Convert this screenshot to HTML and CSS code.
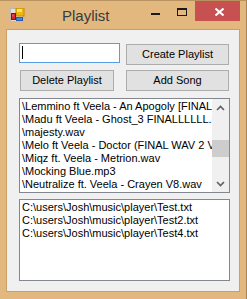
FILE: index.html
```html
<!DOCTYPE html>
<html>
<head>
<meta charset="utf-8">
<link rel="stylesheet" href="styles.css">
</head>
<body>
<div class="window">
  <div class="titlebar">
    <svg class="appicon" width="15" height="14" viewBox="0 0 15 14">
      <rect x="0.5" y="0.5" width="13" height="13" fill="#e8e0d0" stroke="#b9b9b9"/>
      <rect x="6" y="0" width="8" height="8" fill="#f2b705" stroke="#c08a00"/>
      <rect x="7" y="1" width="5" height="3" fill="#ffe080"/>
      <rect x="1.5" y="5.5" width="4" height="6" fill="#d0282c" stroke="#8a1010"/>
      <rect x="2.5" y="6.5" width="1" height="2" fill="#f08080"/>
      <rect x="6.5" y="9.5" width="6" height="3" fill="#4a86e0" stroke="#2a5db0"/>
    </svg>
    <div class="title">Playlist</div>
    <div class="spacer"></div>
    <div class="minbtn"><span class="minbar"></span></div>
    <div class="maxbtn"><span class="maxbox"></span></div>
    <div class="closebtn">
      <svg width="9" height="8" viewBox="0 0 9 8"><path d="M0.5 0.5 L8.5 7.5 M8.5 0.5 L0.5 7.5" stroke="#ffffff" stroke-width="2" fill="none"/></svg>
    </div>
  </div>
  <div class="client">
    <div class="row1">
      <div class="textbox"><span class="caret"></span></div>
      <div class="btn btn-create">Create Playlist</div>
    </div>
    <div class="row2">
      <div class="btn btn-delete">Delete Playlist</div>
      <div class="btn btn-add">Add Song</div>
    </div>
    <div class="listbox list1">
      <div class="items">
        <div class="item">\Lemmino ft Veela - An Apogoly [FINAL].wav</div>
        <div class="item">\Madu ft Veela - Ghost_3 FINALLLLLL.mp3</div>
        <div class="item">\majesty.wav</div>
        <div class="item">\Melo ft Veela - Doctor (FINAL WAV 2 Veela).wav</div>
        <div class="item">\Miqz ft. Veela - Metrion.wav</div>
        <div class="item">\Mocking Blue.mp3</div>
        <div class="item">\Neutralize ft. Veela - Crayen V8.wav</div>
      </div>
      <div class="scrollbar">
        <div class="arrow up">
          <svg width="9" height="6" viewBox="0 0 9 6"><path d="M1 5 L4.5 1.5 L8 5" stroke="#606060" stroke-width="1.6" fill="none"/></svg>
        </div>
        <div class="track"><div class="thumb"></div></div>
        <div class="arrow down">
          <svg width="9" height="6" viewBox="0 0 9 6"><path d="M1 1 L4.5 4.5 L8 1" stroke="#606060" stroke-width="1.6" fill="none"/></svg>
        </div>
      </div>
    </div>
    <div class="listbox list2">
      <div class="items">
        <div class="item">C:\users\Josh\music\player\Test.txt</div>
        <div class="item">C:\users\Josh\music\player\Test2.txt</div>
        <div class="item">C:\users\Josh\music\player\Test4.txt</div>
      </div>
    </div>
  </div>
</div>
</body>
</html>
```
FILE: styles.css
```css
html, body {
  margin: 0;
  padding: 0;
  background: #e3b87e;
}
.window {
  width: 247px;
  height: 299px;
  box-sizing: border-box;
  background: #e3b87e;
  border-top: 1px solid #b8935f;
  border-right: 1px solid #a8834f;
  overflow: hidden;
  font-family: "Liberation Sans", Arial, sans-serif;
}
.titlebar {
  display: flex;
  align-items: flex-start;
  height: 28px;
}
.appicon {
  margin-left: 10px;
  margin-top: 7px;
  flex: none;
}
.title {
  margin-left: 37px;
  margin-top: 6px;
  font-size: 15px;
  line-height: 18px;
  color: #333c42;
}
.spacer { flex: 1; }
.minbtn {
  width: 9px;
  margin-top: 12px;
}
.minbar {
  display: block;
  width: 9px;
  height: 2px;
  background: #1a1a1a;
}
.maxbtn {
  margin-left: 17px;
  margin-top: 7px;
}
.maxbox {
  display: block;
  width: 10px;
  height: 8px;
  box-sizing: border-box;
  border: 1px solid #1a1a1a;
  border-top-width: 2px;
}
.closebtn {
  margin-left: 8px;
  margin-right: 6px;
  width: 45px;
  height: 20px;
  background: #c75050;
  display: flex;
  align-items: center;
  justify-content: center;
}
.closebtn svg { margin-top: 2px; margin-left: 3px; }
.client {
  margin-left: 6px;
  width: 234px;
  height: 263px;
  box-sizing: border-box;
  border: 1px solid #c9a06a;
  background: #f0f0f0;
  display: flex;
  flex-direction: column;
}
.row1 {
  display: flex;
  align-items: flex-start;
  margin-top: 13px;
}
.textbox {
  margin-left: 12px;
  width: 101px;
  height: 20px;
  box-sizing: border-box;
  border: 1px solid #569de5;
  background: #ffffff;
  padding: 2px 0 0 2px;
}
.caret {
  display: block;
  width: 1px;
  height: 13px;
  background: #000000;
}
.btn {
  box-sizing: border-box;
  height: 21px;
  border: 1px solid #adadad;
  background: #e1e1e1;
  font-size: 11px;
  line-height: 19px;
  text-align: center;
  color: #000000;
  white-space: nowrap;
}
.btn-create {
  margin-left: 6px;
  margin-top: 1px;
  width: 103px;
}
.row2 {
  display: flex;
  margin-top: 5px;
}
.btn-delete {
  margin-left: 13px;
  width: 94px;
}
.btn-add {
  margin-left: 12px;
  width: 103px;
}
.listbox {
  margin-left: 12px;
  width: 211px;
  box-sizing: border-box;
  border: 1px solid #828790;
  background: #ffffff;
  display: flex;
  overflow: hidden;
}
.list1 {
  margin-top: 7px;
  height: 95px;
}
.list2 {
  margin-top: 6px;
  height: 82px;
}
.items {
  flex: 1;
  min-width: 0;
  overflow: hidden;
  padding: 1px 0 0 2px;
}
.item {
  font-size: 11px;
  line-height: 13px;
  color: #000000;
  white-space: nowrap;
}
.scrollbar {
  width: 17px;
  flex: none;
  background: #f0f0f0;
  display: flex;
  flex-direction: column;
}
.arrow {
  height: 17px;
  display: flex;
  align-items: center;
  justify-content: center;
}
.track {
  flex: 1;
  display: flex;
  flex-direction: column;
}
.thumb {
  margin-top: 24px;
  height: 17px;
  background: #cdcdcd;
}
```
